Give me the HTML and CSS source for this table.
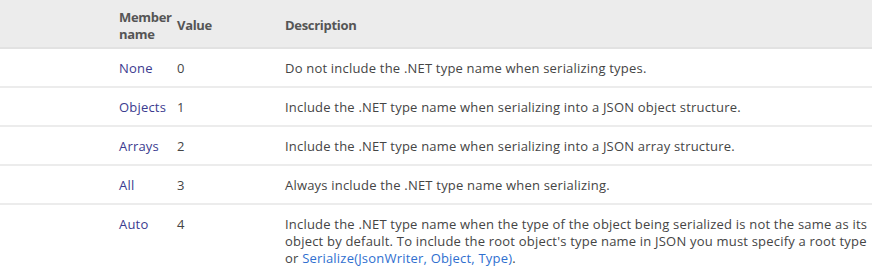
FILE: index.html
```html
<!DOCTYPE html>
<html lang="en">
    <head>
        <meta charset="UTF-8" />
        <title>TypeNameHandling Enumeration</title>
        <link rel="stylesheet" href="styles.css">
    </head>
    <body>
        <table class="members">
            <thead>
                <tr>
                    <th class="col-name">Member name</th>
                    <th class="col-value">Value</th>
                    <th class="col-desc">Description</th>
                </tr>
            </thead>
            <tbody>
                <tr>
                    <td class="col-name"><a href="#">None</a></td>
                    <td class="col-value">0</td>
                    <td class="col-desc">Do not include the .NET type name when serializing types.</td>
                </tr>
                <tr>
                    <td class="col-name"><a href="#">Objects</a></td>
                    <td class="col-value">1</td>
                    <td class="col-desc">Include the .NET type name when serializing into a JSON object structure.</td>
                </tr>
                <tr>
                    <td class="col-name"><a href="#">Arrays</a></td>
                    <td class="col-value">2</td>
                    <td class="col-desc">Include the .NET type name when serializing into a JSON array structure.</td>
                </tr>
                <tr>
                    <td class="col-name"><a href="#">All</a></td>
                    <td class="col-value">3</td>
                    <td class="col-desc">Always include the .NET type name when serializing.</td>
                </tr>
                <tr>
                    <td class="col-name"><a href="#">Auto</a></td>
                    <td class="col-value">4</td>
                    <td class="col-desc">Include the .NET type name when the type of the object being serialized is not the same as its<br>
                        object by default. To include the root object's type name in JSON you must specify a root type<br>
                        or <a class="ref" href="#">Serialize(JsonWriter, Object, Type)</a>.</td>
                </tr>
            </tbody>
        </table>
    </body>
</html>
```

FILE: styles.css
```css
body {
    margin: 0;
    background: #fff;
    font-family: "Open Sans", sans-serif;
    font-size: 13px;
    letter-spacing: 0.2px;
    color: #454545;
    overflow: hidden;
}
.members {
    border-collapse: collapse;
    width: 872px;
    table-layout: fixed;
}
.members th {
    background-color: #ececec;
    color: #555;
    font-weight: bold;
    letter-spacing: -0.3px;
    text-align: left;
    line-height: 17px;
    height: 43px;
    padding: 4px 0 0;
    border-bottom: 2px solid #e2e2e2;
    vertical-align: middle;
}
.members td {
    padding: 11px 0 9px;
    line-height: 17px;
    border-bottom: 2px solid #ececec;
    vertical-align: top;
    white-space: nowrap;
}
.members tbody tr:last-child td {
    border-bottom: none;
}
.col-name {
    width: 58px;
    padding-left: 119px !important;
}
th.col-name {
    white-space: normal;
}
.col-value {
    width: 108px;
}
.col-desc {
    width: 587px;
}
.members td a {
    color: #3b3b8f;
    text-decoration: none;
}
.members td a.ref {
    color: #2f6fd0;
}
```
